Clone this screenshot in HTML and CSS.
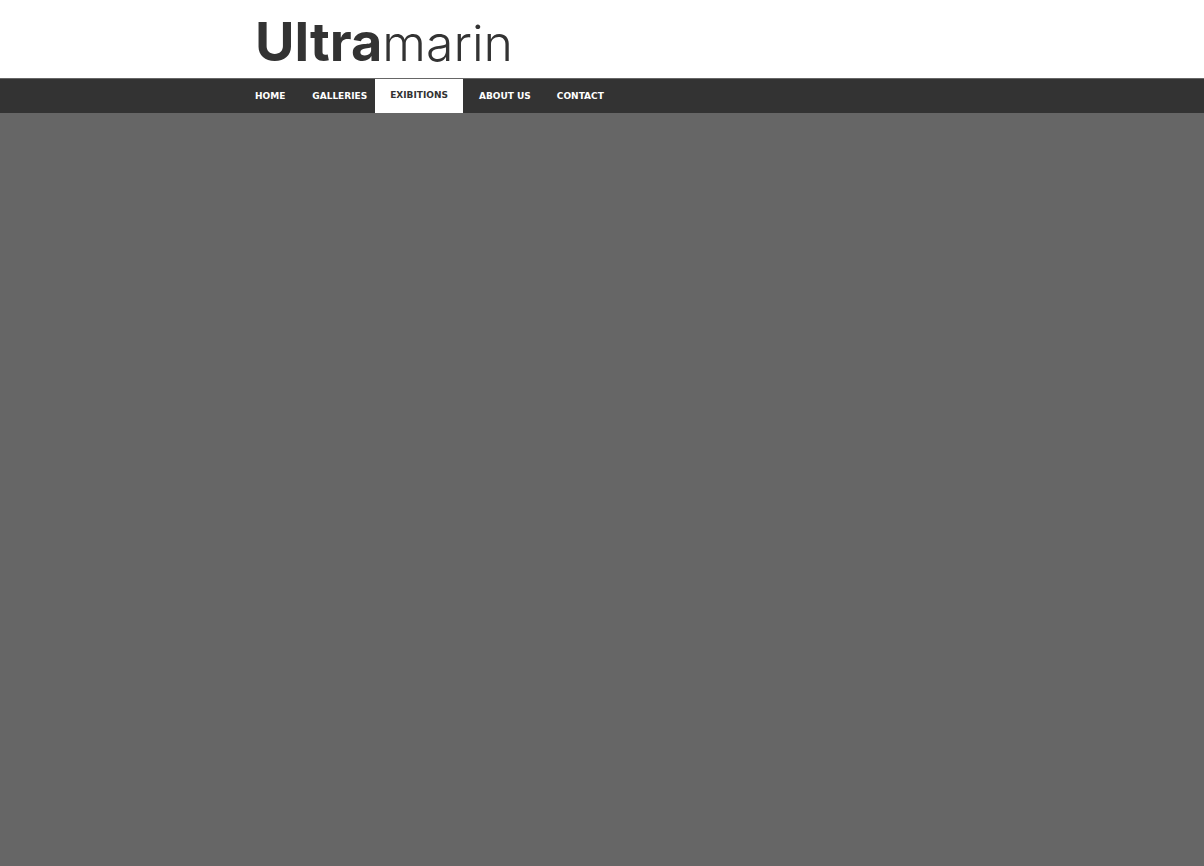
FILE: index.html
```
<!DOCTYPE html>
<html lang="en">
<head>
<meta charset="utf-8">
<title>Ultramarin</title>
<link rel="stylesheet" href="styles.css">
</head>
<body>
<header class="header">
  <div class="container">
    <a class="logo" href="#"><strong class="logo-bold">Ultra</strong><span class="logo-light">marin</span></a>
  </div>
</header>
<nav class="nav" aria-label="Main">
  <ul class="container menu">
    <li><a class="link" href="#">HOME</a></li>
    <li><a class="link link-short" href="#">GALLERIES</a></li>
    <li><a class="link link-active" href="#">EXIBITIONS</a></li>
    <li><a class="link link-drop" href="#">ABOUT US</a></li>
    <li><a class="link" href="#">CONTACT</a></li>
  </ul>
</nav>
</body>
</html>
```
FILE: styles.css
```
* {
  box-sizing: border-box;
}

body {
  margin: 0;
  background: #666;
  font-family: Verdana, "DejaVu Sans", sans-serif;
}

.container {
  max-width: 720px;
  margin: 0 auto;
}

.header {
  background: #fff;
  border-bottom: 1px solid #666;
}

.logo {
  display: block;
  height: 78px;
  padding: 0 13px;
  color: #333;
  font-family: Inter, "Liberation Sans", sans-serif;
  font-size: 54px;
  line-height: 84px;
  text-decoration: none;
  white-space: nowrap;
}

.logo-bold {
  font-weight: 700;
}

.logo-light {
  font-size: 50px;
  font-weight: 300;
}

.nav {
  height: 34px;
  background: #333;
}

.menu {
  display: flex;
  padding: 0;
  list-style: none;
}

.link {
  display: block;
  height: 34px;
  padding: 0 13px;
  color: #fff;
  font-size: 9px;
  font-weight: 700;
  line-height: 34px;
  text-decoration: none;
  white-space: nowrap;
}

.link-short {
  padding: 0 8px 0 14px;
}

.link-active {
  margin-right: 3px;
  padding: 0 15px;
  background: #fff;
  color: #333;
  line-height: 32px;
}

.link-drop {
  height: 35px;
  background: #333;
}
```
